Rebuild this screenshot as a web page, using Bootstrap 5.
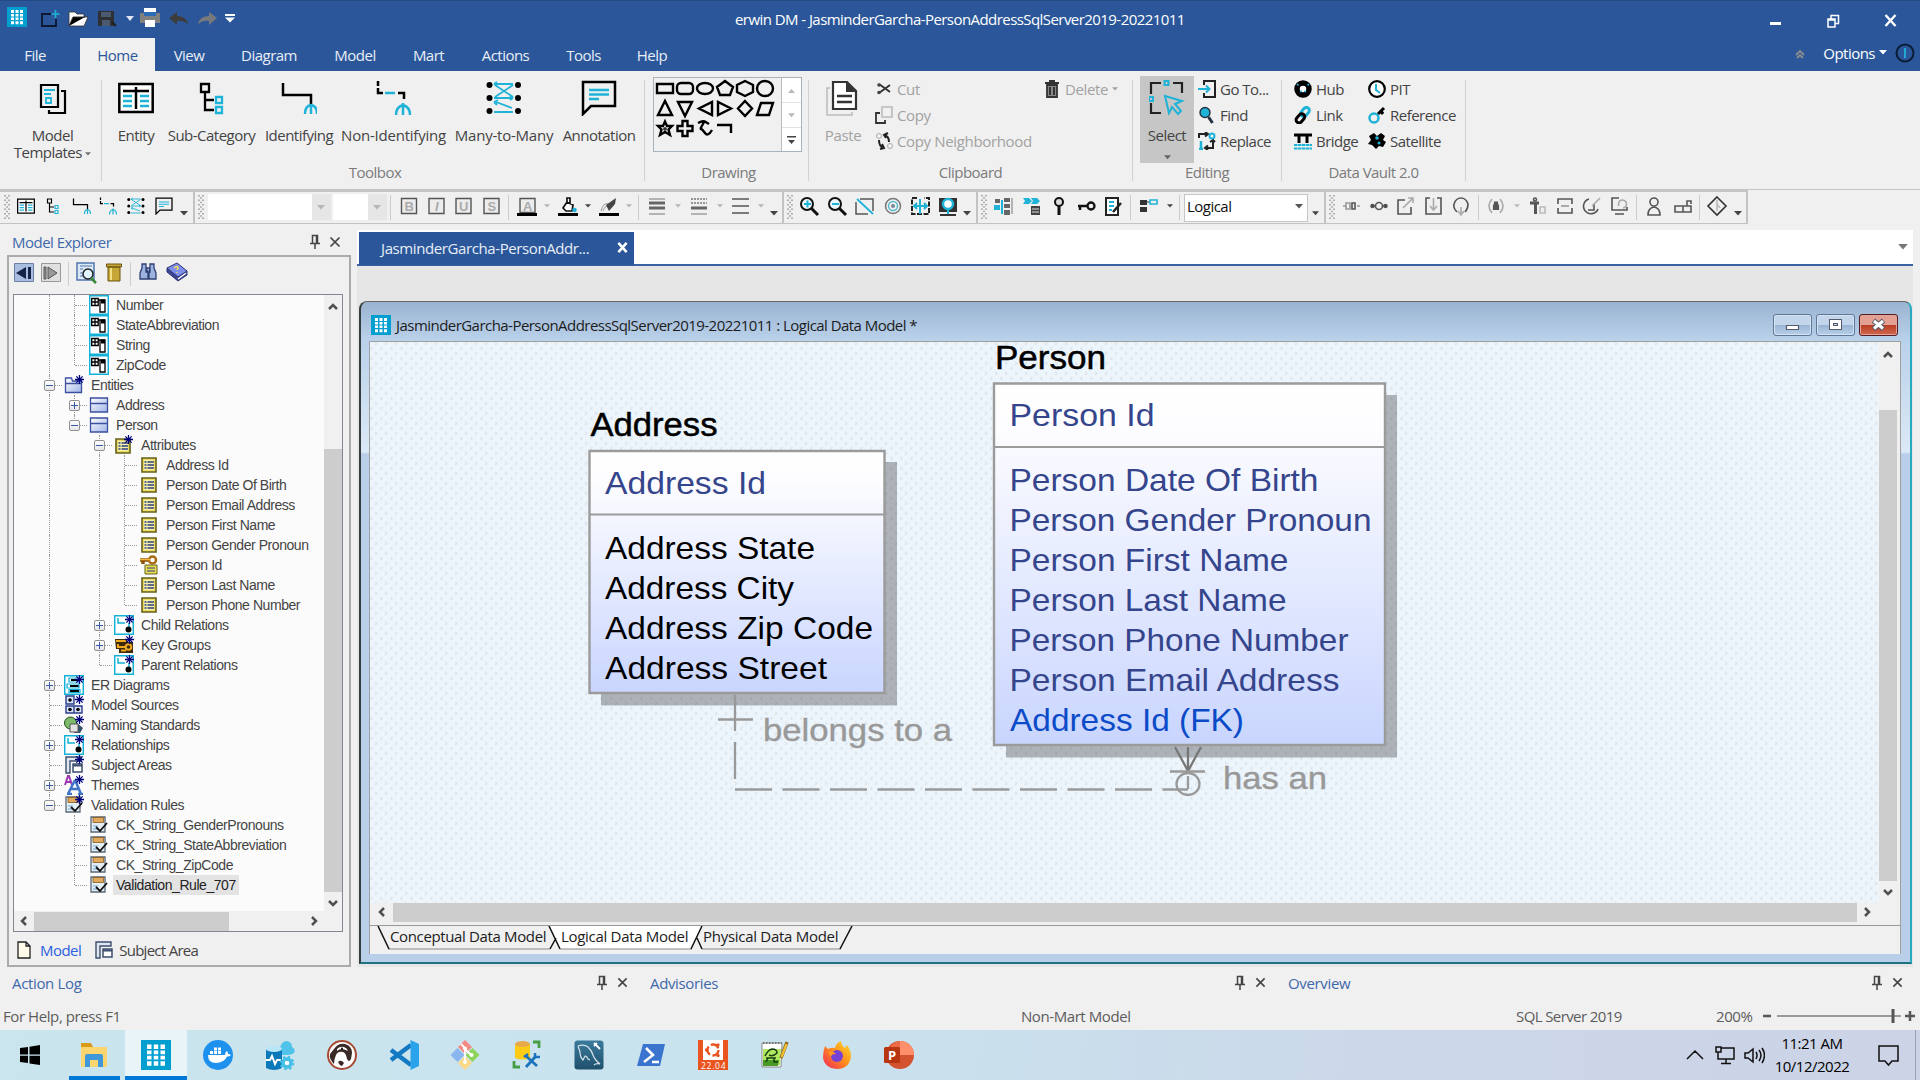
<!DOCTYPE html>
<html lang="en">
<head>
<meta charset="utf-8">
<title>erwin DM</title>
<link href="https://cdn.jsdelivr.net/npm/bootstrap@5.3.0/dist/css/bootstrap.min.css" rel="stylesheet">
<style>
:root{--ribbon:#2b579a;--cy:#1fb3d8;--face:#f0f0f0}
body{width:1920px;height:1080px;overflow:hidden;background:var(--face);font:15px/18px "Open Sans","Noto Sans",sans-serif;letter-spacing:-.52px;color:#444}
svg{display:block;flex:none}
.topbar{background:var(--ribbon);color:#fff;height:71px;border-top:1px solid #244a85}
.topbar .titlerow{height:37px}
.topbar .qat{width:735px}
.apptitle{letter-spacing:-.56px;padding-bottom:2px}
.tabsrow{height:33px}
.rtab{line-height:34px;height:33px;text-align:center;color:#e8eef7}
.rtab.active{background:var(--face);color:var(--ribbon)}
.tabgrid{display:grid;grid-template-columns:70px 10px 75px 68px 92px 80px 67px 87px 69px 68px}
.ribbon{height:119px;border-bottom:1px solid #c4c4c4;padding-top:1px}
.rgroup{border-right:1px solid #d2d2d2;margin:8px 0 0;height:101px;display:flex;flex-direction:column;justify-content:space-between;position:relative}
.rgroup>.cap{text-align:center;color:#7b7b7b;line-height:17px;white-space:nowrap;padding-left:4px}
.bigb{text-align:center;white-space:nowrap;line-height:17px}
.bigb svg{margin:0 auto 11px}
.toolgrid{display:grid;grid-template-columns:52px 99px 76px 113px 108px 82px;padding-left:8px}
.toolgrid .airy{letter-spacing:-.22px}
.gallery{width:149px;height:75px;border:1px solid #aab2ba;margin:-3px 0 0 8px}
.gallery .scr{width:20px;background:#fff;border-left:1px solid #bbb}
.gallery .scr div{height:25px;border-bottom:1px solid #c4c4c4}
.mini{height:26.2px;line-height:20px;white-space:nowrap;display:flex;gap:4px;align-items:center}
.dis{color:#a2a2a2;letter-spacing:-.35px}
.selbtn{width:54px;height:87px;background:#c6c6c6;margin:-4px 0 0 7px;padding-top:4px;text-align:center}
.strips{height:40px}
.strip{height:34px;border:1px solid #c3c3c3;border-width:2px 2px 1px 0}
.combo{background:#fff;border:1px solid #c6c6c6;height:28px;width:124px;padding:0 4px 3px 2px;color:#111}
.mainrow{height:737px}
.leftdock{width:357px;border-right:0}
.docktitle{color:#3f68ab}
.leftdock .docktitle{height:25px;padding:0 12px 2px}
.xframe{width:344px;height:712px;margin-left:7px;border:2px solid #ababab}
.treebox{width:330px;height:638px;border:1px solid #828790;background:#fbfbfb;margin-left:4px}
.treeview{width:310px;height:616px;overflow:hidden;font:14px/20px "Liberation Sans",sans-serif;letter-spacing:-.44px;color:#444}
.trow{height:20px;display:flex;align-items:center;padding-left:23px;white-space:nowrap}
.tcell{width:25px;height:20px;position:relative;flex:none}
.tcell::before{content:"";position:absolute;left:12px;top:0;height:20px;border-left:1px dotted #999}
.tcell.l::before{height:10px}
.tcell.n::before{display:none}
.tcell.t::after,.tcell.l::after{content:"";position:absolute;left:13px;top:10px;width:12px;border-top:1px dotted #999}
.tcell i{position:absolute;z-index:1;left:7px;top:5px;width:11px;height:11px;border:1px solid #919191;border-radius:2px;background:linear-gradient(#fff,#e6e6e6)}
.tcell i::before{content:"";position:absolute;left:1px;top:4px;width:7px;height:1px;background:#3a5aa8}
.tcell i.plus::after{content:"";position:absolute;left:4px;top:1px;width:1px;height:7px;background:#3a5aa8}
.trow svg{margin:0 4px 0 2px}
.trow .lbl{padding:0 3px}
.trow .lbl.sel{background:#e3e3e3;color:#222}
.vbar{width:18px;height:616px;background:#f0f0f0}
.thumb{background:#cdcdcd}
.flip{transform:rotate(180deg)}
.paneltabs{height:35px;padding-left:8px;letter-spacing:-.72px}
.rightdock{width:1556px}
.doctabs{height:36px;background:#fff;border-bottom:2px solid #3a62a5}
.doctab{background:var(--ribbon);color:#e8eef7;width:275px;margin:2px 0 -1px 2px;padding:0 6px 2px 22px;letter-spacing:-.4px}
.mdiarea{background:#e6e6e6;height:701px;padding:35px 0 0 2px}
.mdiwin{width:1553px;height:663px;border:2px solid #353c3f;border-top:1px solid #666;border-right-color:#28a9c0;border-bottom:2px solid #1d7480;border-radius:8px 8px 0 0;background:linear-gradient(#9ab3d0 0,#b9d1ea 38px,#dce9f6 150px,#b9cfe9 152px);padding:0 9px}
.mdititle{height:39px;color:#1c1c1c;padding:6px 0 0 1px;letter-spacing:-.54px}
.wbtns{gap:4px;margin-right:3px}
.wbtn{width:39px;height:22px;border:1px solid #5f7797;border-radius:3px;box-shadow:inset 0 0 0 1px #d5e3f2;background:linear-gradient(#c3d5ea 48%,#98b5d4 50%,#b8cfe8)}
.wbtn.red{border-color:#5a1a22;box-shadow:inset 0 0 0 1px #e0a59b;background:linear-gradient(#e5a094 48%,#b93c22 50%,#cf6a50)}
.client{width:1532px;height:613px;border:1px solid #a0a0a0;border-bottom:0;background:#f0f0f0;margin-left:-1px}
.canvasrow{height:561px}
.hbar{height:22px}
.modeltabs{height:27px;border-top:1px solid #999;color:#1c1c1c}
.docks{height:31px;letter-spacing:-.35px}
.docks>div{width:638px;padding:0 10px 0 12px}
.docks>div:last-child{padding:0 17px 0 12px}
.docks .pinned{margin-left:auto;margin-right:9px}
.statusrow{height:32px;color:#5c5c5c;padding:4px 0 0 3px;letter-spacing:-.42px}
.taskbar{height:50px;background:linear-gradient(95deg,#cbe5ee 0,#c9e2ee 45%,#cbd8e9 70%,#ccd3e6 100%)}
.titem{width:61.9px;height:50px;display:flex;align-items:center;justify-content:center}
.titem.run{box-shadow:inset 0 -4px #0078d7}
.titem.slim{width:51px;margin:0 5.5px}
.titem.act{background:#e8f4f8}
.clock{width:96px;margin:2px 18px 0 -1px;color:#000;line-height:23px;letter-spacing:-.5px}
</style>
<script src="https://cdn.jsdelivr.net/npm/bootstrap@5.3.0/dist/js/bootstrap.bundle.min.js"></script>
</head>
<body>
<svg width="0" height="0" class="position-absolute">
<defs>
<symbol id="erwin" viewBox="0 0 20 20"><path fill="#009fd0" d="M0 0h20v20H0z"/><g fill="#fff"><path d="M4 3h3v3H4zM8.500 3h3v3h-3zM13 3h3v3h-3zM4 7h3v2.500H4zM8.500 7h3v2.500h-3zM13 7h3v2.500h-3zM4 10.500h3V13H4zM8.500 10.500h3V13h-3zM13 10.500h3V13h-3zM4 14.200h3v3H4zM8.500 14.200h3v3h-3zM13 14.200h3v3h-3z"/></g></symbol>
<symbol id="entity" viewBox="0 0 36 36"><path fill="#fff" stroke="#000" stroke-width="2.500" d="M1.300 4h33.400v28H1.300z"/><path stroke="#000" stroke-width="2.500" d="M5 11h26M18 7v22"/><path stroke="#1fb3d8" stroke-width="2.500" d="M5 16h9M5 21h9M5 26h9M22 16h9M22 21h9M22 26h9"/></symbol>
<symbol id="subcat" viewBox="0 0 36 36"><path fill="none" stroke="#000" stroke-width="2.300" d="M7 4h8v8H7zM11 12v18h9M11 20h9"/><path fill="none" stroke="#1fb3d8" stroke-width="2.300" d="M22 17h6v6h-6zM22 27h6v6h-6z"/></symbol>
<symbol id="ident" viewBox="0 0 36 36"><path fill="none" stroke="#000" stroke-width="2.500" d="M2 3v12h28v11"/><path fill="none" stroke="#1fb3d8" stroke-width="2.500" d="M30 24v10M24 34q0-8 6-9q6 1 6 9"/></symbol>
<symbol id="nonid" viewBox="0 0 36 36"><path fill="none" stroke="#000" stroke-width="2.500" d="M2 1v5M2 8v5h5M22 13h6v6"/><path fill="none" stroke="#1fb3d8" stroke-width="2.500" d="M9 13h10M27 23v12M20 35q0-8 7-10q7 2 7 10"/></symbol>
<symbol id="many" viewBox="0 0 36 36"><path fill="none" stroke="#1fb3d8" stroke-width="1.800" d="M8 4h19M8 18h19M8 32h19M9 5l18 12M27 5L9 17M10 22l16 6M8 4l3-2M8 4l3 2M27 18l-3-2M27 18l-3 2M8 22l4-2M8 22l3 3"/><g><circle cx="3.500" cy="5" r="3"/><circle cx="3.500" cy="18" r="3"/><circle cx="3.500" cy="31" r="3"/><circle cx="32" cy="5" r="3"/><circle cx="32" cy="18" r="3"/><circle cx="32" cy="31" r="3"/></g></symbol>
<symbol id="annot" viewBox="0 0 36 36"><path fill="none" stroke="#000" stroke-width="2.500" d="M2 34V2h32v24H10z"/><path stroke="#1fb3d8" stroke-width="2.300" d="M8 10h20M8 14.500h20M8 19h10"/></symbol>
<symbol id="pin" viewBox="0 0 12 16"><path fill="none" stroke="#444" stroke-width="1.500" d="M3.500 9V1.500h5V9M1 9.500h10M6 10v5M7.500 2v7"/></symbol>
<symbol id="xx" viewBox="0 0 12 12"><path stroke="currentColor" stroke-width="1.700" d="M1.500 1.500l9 9M10.500 1.500l-9 9"/></symbol>
<symbol id="dd" viewBox="0 0 8 5"><path fill="currentColor" d="M0 0h8L4 4.500z"/></symbol>
<symbol id="chev" viewBox="0 0 10 7"><path fill="none" stroke="#505050" stroke-width="2.500" d="M1 6l4-4 4 4"/></symbol>
<symbol id="grip" viewBox="0 0 6 24"><path stroke="#999" stroke-width="1.500" stroke-dasharray="1.500 3" d="M1 0v24M5 0v24"/><path stroke="#999" stroke-width="1.500" stroke-dasharray="1.500 3" stroke-dashoffset="2.200" d="M3 0v24"/></symbol>
<linearGradient id="gblue" x2="1" y2="1"><stop stop-color="#fff"/><stop offset="1" stop-color="#9fb4e6"/></linearGradient>
<symbol id="star" viewBox="0 0 10 10"><path stroke="#00007a" stroke-width="1.400" d="M5 0v10M0 5h10M1.500 1.500l7 7M8.500 1.500l-7 7"/></symbol>
<symbol id="t-dom" viewBox="0 0 20 20"><path fill="#fff" stroke="#12b2d8" stroke-width="1.500" d="M.7.7h18.600v18.600H.7z"/><path fill="none" stroke="#000" stroke-width="1.300" d="M2.700 3.500h6.500v7H2.700zM2.700 7h6.500M6 3.500v7M11 5h5v12h-5zM9 5h2"/><path d="M12 4.500h4v4h-4z"/></symbol>
<symbol id="t-ent" viewBox="0 0 20 20"><path fill="url(#gblue)" stroke="#3d50a0" stroke-width="1.300" d="M1.500 3h17v14h-17z"/><path stroke="#3d50a0" stroke-width="1.500" d="M2 8.500h16"/></symbol>
<symbol id="t-ents" viewBox="0 0 20 20"><path fill="url(#gblue)" stroke="#3d50a0" stroke-width="1.300" d="M1.500 17.500V3h6l1 3h9v11.500zM2 8.500h15"/><use href="#star" x="11" y="0" width="9" height="9"/></symbol>
<symbol id="t-att" viewBox="0 0 20 20"><path fill="#e9da62" stroke="#66601b" stroke-width="1.600" d="M3 3h14v14H3z"/><path fill="#f6f0a8" d="M5 5h10v10H5z"/><path stroke="#2f3f80" stroke-width="1.400" d="M5.500 7h2M8.500 7H15M5.500 10h2M8.500 10H15M5.500 13h2M8.500 13H15"/></symbol>
<symbol id="t-atts" viewBox="0 0 20 20"><use href="#t-att" width="20" height="20" x="-1" y="1"/><use href="#star" x="10" y="0" width="9" height="9"/></symbol>
<symbol id="t-key" viewBox="0 0 20 20"><path fill="#e8dc55" stroke="#66601b" d="M6 10h12v9H6z"/><path stroke="#2f3f80" d="M8 13h8M8 16h8"/><path fill="none" stroke="#8a5208" stroke-width="3.500" d="M1 5h10M4 5v4"/><circle cx="13.500" cy="5" r="3.500" fill="#fff" stroke="#a86a10" stroke-width="2.500"/><path stroke="#f2b53a" stroke-width="1.500" d="M1 4.500h10"/></symbol>
<symbol id="t-rel" viewBox="0 0 20 20"><path fill="#fff" stroke="#12b2d8" stroke-width="1.500" d="M.7.7h18.600v18.600H.7z"/><path fill="none" stroke="#12b2d8" stroke-width="1.500" d="M4 3v5h7M15 8v4"/><circle cx="14.500" cy="14.500" r="3"/><use href="#star" x="11" y="0" width="9" height="9"/></symbol>
<symbol id="t-kg" viewBox="0 0 20 20"><path fill="#3d2a08" d="M1 4h12v3h6v11H5v-4H2z"/><path fill="none" stroke="#f0a922" stroke-width="2" d="M2 6h10M4 9v3h8M7 15.500h5"/><circle cx="14.500" cy="12" r="2.800" fill="none" stroke="#f0a922" stroke-width="2"/><use href="#star" x="11" y="0" width="9" height="9"/></symbol>
<symbol id="t-er" viewBox="0 0 20 20"><path fill="#fff" stroke="#12b2d8" stroke-width="1.500" d="M.7.7h18.600v18.600H.7z"/><path stroke="#000" stroke-width="2.200" d="M7 5h7M6 11h9M6 16h9"/><path fill="none" stroke="#12b2d8" stroke-width="1.200" d="M5 3h10v4H5zM3 9h12v4H3zM5 14.500h11v3H5z"/><use href="#star" x="11" y="0" width="9" height="9"/></symbol>
<symbol id="t-src" viewBox="0 0 20 20"><path fill="#dbe4fa" stroke="#2b3e8a" stroke-width="1.400" d="M2 1h8v8H2zM2 11h8v7H2zM10 11h8v7h-8z"/><circle cx="6" cy="5" r="1.800"/><circle cx="6" cy="14.500" r="1.800"/><circle cx="14" cy="14.500" r="1.800"/><use href="#star" x="11" y="0" width="9" height="9"/></symbol>
<symbol id="t-nam" viewBox="0 0 20 20"><path fill="#35516c" d="M13 8l6 5-3 5h-6z"/><circle cx="6.500" cy="8" r="6" fill="#7dbb6a" stroke="#1e4f1e"/><path fill="#e2e2e2" stroke="#555" d="M6 9h8v8H6z"/><use href="#star" x="11" y="0" width="9" height="9"/></symbol>
<symbol id="t-sub" viewBox="0 0 20 20"><path fill="#dfe6f0" stroke="#3b4f6d" stroke-width="1.400" d="M2 2h15v4H6v12H2z"/><path fill="#fff" stroke="#3b4f6d" stroke-width="1.500" d="M9 9h9v8H9z"/><path stroke="#3b4f6d" stroke-width="2" d="M9 10.500h9"/></symbol>
<symbol id="t-subs" viewBox="0 0 20 20"><use href="#t-sub" width="20" height="20"/><use href="#star" x="11" y="0" width="9" height="9"/></symbol>
<symbol id="t-thm" viewBox="0 0 20 20"><path fill="none" stroke="#9b36b0" stroke-width="2" d="M1 10L4 1h1l3 9M2 7h5"/><path fill="none" stroke="#3f74c8" stroke-width="2.500" d="M4 19l6.500-13h1L17 19M7 14h8M3 19h5M14 19h5"/><use href="#star" x="11" y="0" width="9" height="9"/></symbol>
<symbol id="t-val" viewBox="0 0 20 20"><path fill="#e4eef6" stroke="#5a6875" stroke-width="1.300" d="M2 2h14v15H2z"/><path fill="#e0a95e" stroke="#8a5a1c" stroke-width=".8" d="M4 2.500h10.500v5H4z"/><path stroke="#6da5cf" d="M4 11h5M4 14h5"/><path fill="none" stroke="#111" stroke-width="1.800" d="M7 12l4 4 7-8"/></symbol>
<symbol id="t-vals" viewBox="0 0 20 20"><use href="#t-val" width="20" height="20"/><use href="#star" x="11" y="0" width="9" height="9"/></symbol>
</defs></svg>

<header class="topbar">
 <div class="titlerow d-flex align-items-center">
  <div class="qat">
   <svg width="250" height="38" viewBox="0 0 250 38"><use href="#erwin" x="7" y="6" width="20" height="20"/>
    <path fill="none" stroke="#0c1830" stroke-width="1.800" d="M51 13h-9v12h14v-7"/><path stroke="#1fb3d8" stroke-width="1.600" d="M55.500 9v8M51.500 13h8"/>
    <path fill="#fff" stroke="#333" stroke-width=".8" d="M69 25V11h6l2 2h7v3h4l-4 9z"/><path stroke="#333" d="M69 25l4-9h12"/>
    <path fill="#2f3033" d="M98 10h16v15H98z"/><path fill="#4c5a70" d="M101 11h10v5h-10zM102 19h8v6h-8z"/><path stroke="#222" stroke-width="2" d="M112 21l4 4"/>
    <path fill="#dfe6f3" d="M126 15h8l-4 5z"/>
    <path fill="#fff" d="M144 7h12v7h-12z"/><path fill="#808080" d="M140 12h20v10h-20z"/><path fill="#2b6cb5" d="M144 11h12v4h-12z"/><path fill="#fff" d="M145 19h10v7h-10z"/>
    <path fill="#3c3c3c" d="M169 17l8-6v4q9 0 11 8q-5-4-11-3v4z"/><path fill="#77797c" d="M217 17l-8-6v4q-9 0-11 8q5-4 11-3v4z"/>
    <path fill="#fff" d="M225 13h10v2h-10zM225 16.500h10l-5 5z"/></svg>
  </div>
  <div class="apptitle text-white">erwin DM - JasminderGarcha-PersonAddressSqlServer2019-20221011</div>
  <svg class="ms-auto" width="190" height="38" viewBox="1730 0 190 38"><path fill="#fff" d="M1770 21h11v3h-11z"/><path fill="none" stroke="#fff" stroke-width="1.500" d="M1828 18h7v8h-7zM1831 18v-3.500h7.500v8H1835M1828 19h7"/><path stroke="#fff" stroke-width="2.400" d="M1885.500 14l10 11M1895.500 14l-10 11"/></svg>
 </div>
 <div class="tabsrow d-flex">
  <nav class="tabgrid"><div class="rtab">File</div><div></div><div class="rtab active">Home</div><div class="rtab">View</div><div class="rtab">Diagram</div><div class="rtab">Model</div><div class="rtab">Mart</div><div class="rtab">Actions</div><div class="rtab">Tools</div><div class="rtab">Help</div></nav>
  <div class="ms-auto d-flex align-items-center pb-1"><svg width="28" height="20"><path fill="none" stroke="#8d8d8d" stroke-width="1.800" d="M1 12l4-4 4 4M2 15l3-3 3 3"/></svg>Options<svg class="ms-1" width="8" height="5"><use href="#dd"/></svg><svg class="ms-2" style="margin-right:5px" width="20" height="20"><circle cx="10" cy="10" r="8.500" fill="none" stroke="#0b1c38" stroke-width="2"/><path stroke="#1fb3d8" stroke-width="1.800" d="M10 5v10"/></svg></div>
 </div>
</header>

<section class="ribbon d-flex">
 <div class="rgroup" style="width:102px"><div class="bigb ps-1"><svg width="36" height="36" viewBox="0 0 36 36"><path fill="none" stroke="#000" stroke-width="2.200" d="M6 5h17v22H6zM26 11h4v22H14v-3"/><path stroke="#1fb3d8" stroke-width="2" d="M9 10h11M9 14h7"/><path fill="none" stroke="#1fb3d8" stroke-width="1.800" d="M11 18h5v5h-5z"/></svg>Model<br>Templates <svg class="d-inline m-0 align-middle opacity-75" width="6" height="4"><use href="#dd"/></svg></div></div>
 <div class="rgroup" style="width:543px"><div class="toolgrid">
  <div class="bigb"><svg width="36" height="36"><use href="#entity"/></svg>Entity</div>
  <div class="bigb"><svg width="36" height="36"><use href="#subcat"/></svg>Sub-Category</div>
  <div class="bigb"><svg width="36" height="36"><use href="#ident"/></svg>Identifying</div>
  <div class="bigb airy"><svg width="36" height="36"><use href="#nonid"/></svg>Non-Identifying</div>
  <div class="bigb airy"><svg width="36" height="36"><use href="#many"/></svg>Many-to-Many</div>
  <div class="bigb"><svg width="36" height="36"><use href="#annot"/></svg>Annotation</div></div>
  <div class="cap">Toolbox</div></div>
 <div class="rgroup" style="width:164px"><div class="gallery d-flex">
   <svg width="127" height="73" fill="none" stroke="#000" stroke-width="2.400"><path d="M3 6h16v9H3z"/><rect x="23" y="5" width="16" height="11" rx="4"/><ellipse cx="51" cy="10.500" rx="8" ry="5.500"/><path d="M71 3l8 6-3 8h-10l-3-8zM91 3l8 4v7l-8 4-8-4V7z"/><ellipse cx="111" cy="10.500" rx="8" ry="7.500"/><path d="M4 37l7-14 7 14zM24 24h14l-7 14zM58 24v13l-13-6.500zM64 24v13l13-6.500zM91 23l7 7.500-7 7.500-7-7.500zM107 25h12l-4 12h-12zM11 43.500l2 4.500h5l-3.500 3.500 1.500 5.500-5-3-5 3 1.500-5.500L4 48h5zM28.500 43h5v5h5v5h-5v5h-5v-5h-5v-5h5zM44 45q8-4 5 1t-2 5 4 4 7-3M50 43l5 3M63 47h14v8"/><circle cx="11" cy="51" r=".6"/></svg>
   <div class="scr"><div class="d-flex justify-content-center align-items-center text-secondary opacity-50"><svg width="7" height="5"><path fill="currentColor" d="M0 5l3.500-4L7 5z"/></svg></div><div class="d-flex justify-content-center align-items-center text-secondary opacity-50"><svg width="7" height="5"><use href="#dd"/></svg></div><div class="d-flex justify-content-center align-items-center border-0"><svg width="9" height="9"><path fill="#444" d="M0 0h9v1.500H0zM1 4h7L4.500 8z"/></svg></div></div></div>
  <div class="cap">Drawing</div></div>
 <div class="rgroup" style="width:324px"><div class="d-flex">
   <div class="bigb dis" style="width:54px;margin-left:7px"><svg width="36" height="36" viewBox="0 0 36 36"><path fill="none" stroke="#bbb" stroke-width="1.500" d="M5 8H2v27h25v-3"/><path fill="#fff" stroke="#333" stroke-width="2.200" d="M8 2h14l9 9v18H8z"/><path fill="#333" d="M21 2v10h10z"/><path stroke="#333" stroke-width="2.500" d="M12 16h15M12 22h15"/></svg>Paste</div>
   <div style="width:168px;margin:-4px 0 0 5px" class="dis">
    <div class="mini"><svg width="18" height="18"><path fill="none" stroke="#333" stroke-width="2" d="M4 4l11 8M4 13l11-8"/><circle cx="4" cy="5" r="1.800" fill="#444"/><circle cx="4" cy="12.500" r="1.800" fill="#444"/></svg>Cut</div>
    <div class="mini"><svg width="18" height="18"><path fill="none" stroke="#bbb" stroke-width="1.600" d="M7 1h10v10H7z"/><path fill="none" stroke="#333" stroke-width="1.800" d="M5 7H1v10h9v-3"/></svg>Copy</div>
    <div class="mini"><svg width="18" height="18"><circle cx="4" cy="4" r="2.500" fill="none" stroke="#aaa"/><circle cx="15" cy="14" r="2.500" fill="none" stroke="#aaa"/><path fill="none" stroke="#222" stroke-width="2" d="M4 8q0 7 5 8M7 12l2 4-4 1M14 10q0-6-5-7M11 6L9 3l4-2"/></svg>Copy Neighborhood</div></div>
   <div class="mini dis" style="margin-top:-4px"><svg width="18" height="20"><path fill="#888" stroke="#333" stroke-width="1.800" d="M4 6h10v12H4z"/><path stroke="#333" stroke-width="2" d="M2 4h14M6 2h6M7 8v8M11 8v8"/></svg>Delete<svg width="6" height="4"><use href="#dd"/></svg></div></div>
  <div class="cap ps-0">Clipboard</div></div>
 <div class="rgroup" style="width:149px"><div class="d-flex">
   <div class="selbtn bigb"><svg width="36" height="36" viewBox="0 0 36 36"><path fill="none" stroke="#222" stroke-width="2.200" d="M2 14V3h10M24 3h9v10M2 23v10h10"/><path fill="none" stroke="#1fb3d8" stroke-width="2" d="M15.500 1h4v4h-4zM0 17h4v4H0zM16 16l17 5-7 3 6 7-3 3-6-7-3 6z"/></svg>Select<svg class="mb-0 opacity-75" style="margin-top:11px" width="7" height="5"><use href="#dd"/></svg></div>
   <div style="margin:-4px 0 0 4px"><div class="mini"><svg width="18" height="18"><path fill="none" stroke="#222" stroke-width="2" d="M6 5V1h11v16H6v-4"/><path fill="none" stroke="#1fb3d8" stroke-width="2" d="M0 9h11M8 5.500L11.500 9 8 12.500"/></svg>Go To...</div>
   <div class="mini"><svg width="18" height="18"><circle cx="7" cy="6.500" r="5" fill="#1fb3d8" stroke="#234" stroke-width="1.400"/><path stroke="#234" stroke-width="3" d="M10.500 11l4 6"/></svg>Find</div>
   <div class="mini"><svg width="18" height="18"><path fill="none" stroke="#222" stroke-width="2" d="M1 6V2h8M15 9v7H8M7 0l3 2-3 2.500M12 10l3-2 2 2M10 13.500L7 16l3 2"/><circle cx="14" cy="4" r="2.500" fill="none" stroke="#1fb3d8" stroke-width="2"/><path stroke="#1fb3d8" stroke-width="2.500" d="M3 9v8M1 17h4"/></svg>Replace</div></div></div>
  <div class="cap ps-0">Editing</div></div>
 <div class="rgroup" style="width:184px"><div class="d-flex" style="margin:-4px 0 0 12px">
   <div style="width:74px"><div class="mini"><svg width="18" height="18"><circle cx="9" cy="9" r="6" fill="#fff" stroke="#000" stroke-width="5.500"/><path stroke="#1fb3d8" stroke-width="1.600" stroke-dasharray="2 8" d="M3 4l12 11M15 4L3 15"/></svg>Hub</div>
   <div class="mini"><svg width="18" height="18" fill="none" stroke-width="3"><rect x="8" y="1" width="6" height="10" rx="3" transform="rotate(40 11 6)" stroke="#1fb3d8"/><rect x="3.500" y="7" width="6" height="10" rx="3" transform="rotate(40 6 12)" stroke="#000"/></svg>Link</div>
   <div class="mini"><svg width="18" height="18"><path stroke="#000" stroke-width="3" d="M0 3h18M5 3v8M13 3v8"/><path stroke="#1fb3d8" stroke-width="2" stroke-dasharray="3.500 .5" d="M0 13h18M0 16.500h18"/></svg>Bridge</div></div>
   <div><div class="mini"><svg width="18" height="18"><circle cx="9" cy="9" r="7.800" fill="#fff" stroke="#000" stroke-width="2.200"/><path fill="none" stroke="#1fb3d8" stroke-width="2" d="M8 4v6l4 3"/></svg>PIT</div>
   <div class="mini"><svg width="18" height="18"><circle cx="6" cy="12" r="4.500" fill="none" stroke="#1fb3d8" stroke-width="2.500"/><path fill="none" stroke="#000" stroke-width="3" d="M10 8l6-6M12 4l3 4"/></svg>Reference</div>
   <div class="mini"><svg width="18" height="18"><path d="M1 4l5-3 3 3 4-3 4 3-2 4 3 2-3 5-4-1-3 3-4-4-4-1 3-4z"/><circle cx="9" cy="6" r="1.800" fill="#1fb3d8"/><circle cx="11" cy="11" r="1.500" fill="#1fb3d8"/></svg>Satellite</div></div></div>
  <div class="cap ps-0">Data Vault 2.0</div></div>
</section>

<section class="strips d-flex">
 <div class="strip"><svg width="193" height="31" viewBox="0 192 193 31"><use href="#grip" x="4" y="195" width="6" height="24"/><use href="#entity" x="17" y="197" width="18" height="18"/><use href="#subcat" x="44" y="197" width="18" height="18"/><use href="#ident" x="72" y="197" width="19" height="18"/><use href="#nonid" x="99" y="197" width="19" height="18"/><use href="#many" x="127" y="197" width="18" height="18"/><use href="#annot" x="155" y="197" width="18" height="18"/><use href="#dd" x="180" y="211" width="8" height="5"/></svg></div>
 <div class="strip"><svg width="587" height="31" viewBox="195 192 587 31"><use href="#grip" x="198" y="195" width="6" height="24"/><path fill="#fff" d="M208 194h104v26H208zM333 194h35v26h-35z"/><path fill="#e6e6e6" d="M312 194h19v26h-19zM368 194h19v26h-19z"/><g color="#b5b5b5"><use href="#dd" x="317" y="205" width="8" height="5"/><use href="#dd" x="373" y="205" width="8" height="5"/><use href="#dd" x="544" y="204" width="6" height="4"/><use href="#dd" x="626" y="204" width="6" height="4"/><use href="#dd" x="675" y="204" width="6" height="4"/><use href="#dd" x="717" y="204" width="6" height="4"/><use href="#dd" x="758" y="204" width="6" height="4"/></g><use href="#dd" x="585" y="204" width="6" height="4"/><use href="#dd" x="770" y="211" width="8" height="5"/>
  <path stroke="#ccc" d="M390.500 195v25M508.500 195v25M638.500 195v25"/>
  <g fill="#ececec" stroke="#555" stroke-width="1.400"><path d="M401.500 198.500h15v15h-15zM429 198.500h15v15h-15zM456 198.500h15v15h-15zM484 198.500h15v15h-15zM520 198.500h15v14h-15z"/></g>
  <g font-family="Liberation Sans" font-size="13" font-weight="700" fill="#aaa" text-anchor="middle"><text x="409" y="211">B</text><text x="436.500" y="211" font-style="italic">I</text><text x="463.500" y="211">U</text><text x="491.500" y="211">S</text><text x="527.500" y="211">A</text></g>
  <path d="M517 213h20v3h-20zM558 213h20v3h-20zM599 213h20v3h-20z"/><path fill="#fff" stroke="#111" stroke-width="1.700" d="M563 208l4-6 6 3-1 6h-6zM567 202v-4h3v6"/><circle cx="574.500" cy="210" r="2.300" fill="#1fb3d8"/><path fill="none" stroke="#999" d="M601 211q2-9 8-7M603 211q2-6 6-5"/><path fill="#444" d="M606 205l10-7-1 6-6 7z"/>
  <path stroke="#777" d="M649 199h16M649 214h16" /><path stroke="#666" stroke-width="3" d="M649 203h16M649 208h16M691 208h16"/><path stroke="#777" stroke-width="1.500" stroke-dasharray="2 1" d="M691 199h16M691 203h16"/><path stroke="#777" d="M691 214h16"/><path stroke="#555" stroke-width="1.300" d="M732 199h17M732 206h17M732 213h17"/></svg></div>
 <div class="strip"><svg width="192" height="31" viewBox="784 192 192 31"><use href="#grip" x="787" y="195" width="6" height="24"/>
  <g fill="#e9f6fb" stroke="#111" stroke-width="2"><circle cx="807" cy="204" r="6"/><path stroke-width="3" d="M811 208l7 7"/><circle cx="835" cy="204" r="6"/><path stroke-width="3" d="M839 208l7 7"/></g><path stroke="#1fb3d8" stroke-width="2" d="M804 204h7M807.500 200.500v7M832 204h7"/>
  <path fill="none" stroke="#555" stroke-width="1.500" d="M860 199h13v12M856 202v12h12"/><path stroke="#1fb3d8" stroke-width="1.800" d="M857 199l16 15"/><circle cx="893" cy="206" r="7.500" fill="none" stroke="#777" stroke-width="1.500"/><circle cx="893" cy="206" r="4.500" fill="none" stroke="#5bc" stroke-width="1.500"/><circle cx="893" cy="206" r="2" fill="#789"/>
  <path fill="none" stroke="#222" stroke-width="2" stroke-dasharray="5 1.500" d="M917 198h-5v16h17v-16h-5"/><path stroke="#1fb3d8" stroke-width="2" d="M914 206h13M920 199v15M917 203l-3 3 3 3M924 203l3 3-3 3"/><path fill="#333" d="M939 198h18v14h-18z"/><circle cx="948" cy="204" r="5" fill="#fff" stroke="#1fb3d8" stroke-width="2.500"/><path stroke="#1fb3d8" stroke-width="2" d="M948 209v5"/><path stroke="#333" stroke-width="2" d="M940 215h16"/><use href="#dd" x="963" y="211" width="8" height="5"/></svg></div>
 <div class="strip d-flex align-items-center"><svg width="206" height="31" viewBox="978 192 206 31"><use href="#grip" x="981" y="195" width="6" height="24"/>
  <path fill="#1fb3d8" d="M994 205h6v5h-6zM1001 200h2v14h-2z"/><path fill="#666" d="M995 199h5v4h-5zM1004 198h6v4h-6zM1004 204h6v4h-6zM1004 210h6v5h-6z"/><path fill="none" stroke="#777" d="M1012 198v16"/><path fill="#1fb3d8" d="M1023 198h6l3 3-3 3h-6l2-3zM1031 198h6l3 3-3 3h-6l2-3z"/><path fill="#444" d="M1031 206h9v9h-9z"/><path stroke="#ddd" d="M1032 209h7M1032 212h7"/>
  <circle cx="1059" cy="202" r="4" fill="#ddd" stroke="#111" stroke-width="2"/><path stroke="#111" stroke-width="3" d="M1059 206v9"/><circle cx="1091" cy="206" r="3.500" fill="none" stroke="#111" stroke-width="2.300"/><path stroke="#111" stroke-width="2.500" d="M1078 206h10M1080 206v4"/><path fill="#fff" stroke="#222" stroke-width="2" d="M1106 198h12v17h-12z"/><path stroke="#1fb3d8" stroke-width="2" d="M1109 202h5M1109 206h5M1109 210h3"/><path stroke="#222" stroke-width="2.500" d="M1113 212l8-9"/>
  <path stroke="#ccc" d="M1130.500 195v25M1179.500 195v25"/><path fill="#333" d="M1140 200h7v5h-7zM1140 207h7v5h-7z"/><path stroke="#333" d="M1147 202h3"/><path fill="none" stroke="#1fb3d8" stroke-width="1.600" d="M1150 200h7v4h-7z"/><use href="#dd" x="1167" y="204" width="6" height="4"/></svg>
  <div class="combo d-flex align-items-center justify-content-between"><span>Logical</span><svg width="8" height="5" color="#555"><use href="#dd"/></svg></div><svg width="16" height="31" viewBox="0 0 16 31"><use href="#dd" x="4" y="19" width="7" height="5"/></svg></div>
 <div class="strip"><svg width="420" height="31" viewBox="1326 192 420 31"><use href="#grip" x="1329" y="195" width="6" height="24"/>
  <g fill="none" stroke="#555" stroke-width="1.600"><path stroke="#999" d="M1343 206h3M1357 206h3M1346 203h4v6h-4z"/><path d="M1352 203h3v6h-3z"/><circle cx="1379" cy="206" r="3.500"/><path d="M1374 206h2M1382 206h2"/><circle cx="1372.500" cy="206" r="1.500" fill="#333"/><circle cx="1385.500" cy="206" r="1.500" fill="#333"/><path d="M1405 200h-7v14h13v-7"/><path stroke="#aaa" d="M1403 208l10-10M1408 198h5v5"/><path d="M1430 198h-4v16h15v-16h-4"/><path stroke="#aaa" d="M1433.500 198v11M1430 206l3.500 4 3.500-4"/><path d="M1457 212q-4-4-3-8q2-6 7-6t7 6q0 5-3 8"/><path stroke="#aaa" d="M1461 207v6M1458 211l3 4 3-4"/><path stroke="#aaa" d="M1492 213q-6-7 0-14M1500 213q6-7 0-14"/><path fill="#555" stroke-width="1.200" d="M1493.500 205h5v4.500h-5zM1494.500 205v-3h3v3"/><circle cx="1535" cy="199.500" r="1.500"/><path stroke-width="3" d="M1535.500 202v12M1530 203h9"/><path stroke="#bbb" d="M1540 207h5v6h-5z"/><path d="M1558 204v-5h14v5M1558 208v5h14v-5"/><path stroke="#999" d="M1561 206h8"/><path d="M1589 199a7.500 7.500 0 1 0 9 10M1594 204v6h-6"/><path stroke="#aaa" d="M1592 206l8-8"/><path d="M1619 198h-7v12h15v-3M1615 214h9"/><path stroke="#aaa" d="M1619 206a4 4 0 1 1 4 2"/><circle cx="1654" cy="202" r="4"/><path d="M1648 215q0-7 6-8q6 1 6 8zM1675 206h8v6h-8zM1683 206h8v6h-8zM1687 206v-5h4v3"/><path stroke="#333" d="M1717 197l9 9-9 9-9-9z"/><path stroke="#bbb" d="M1717 200v11M1717 204l3 4"/></g>
  <g stroke="#ccc"><path d="M1478.500 195v25M1636.500 195v25M1699.500 195v25"/></g><g color="#bbb"><use href="#dd" x="1514" y="204" width="6" height="4"/></g><use href="#dd" x="1734" y="211" width="8" height="5"/></svg></div>
</section>

<main class="mainrow d-flex">
 <aside class="leftdock">
  <div class="docktitle d-flex align-items-center"><span>Model Explorer</span><svg class="ms-auto me-2" width="12" height="16"><use href="#pin"/></svg><svg width="12" height="12" color="#444" class="me-1"><use href="#xx"/></svg></div>
  <div class="xframe">
   <svg width="330" height="37" viewBox="9 257 330 37"><path fill="#a9bde0" stroke="#6d7fa5" d="M14.500 263.500h19v18h-19z"/><path fill="#15234a" d="M26 267v12l-10-6zM28 267h3v12h-3z"/><path fill="#e0e0e0" stroke="#999" d="M41.500 263.500h19v18h-19z"/><path fill="#999" stroke="#555" d="M44 267h2v12h-2zM48 267v12l9-6z"/><path stroke="#ccc" d="M68.500 262v24M130.500 262v24"/><path fill="#dbe8f8" stroke="#5276ad" stroke-width="1.500" d="M77 263h17v17H77z"/><path stroke="#5276ad" d="M80 266h12M80 269h3M80 273h3M80 276h3"/><circle cx="88" cy="274" r="5" fill="#e2f3fb" stroke="#222" stroke-width="1.500"/><path stroke="#3a8a35" stroke-width="2.500" d="M91 278l5 5"/><path fill="#c6a637" stroke="#6c5612" d="M108 267h12v14h-12zM106.500 264h15v3h-15z"/><path stroke="#f3df86" stroke-width="2" d="M111 268v12"/><path fill="#9db3df" stroke="#2e3f74" stroke-width="1.300" d="M142 264h4v4l2 5v6h-8v-6l2-5zM150 264h4v4l2 5v6h-7v-6l1-5zM146 268h4v4h-4z"/><path fill="#3c468f" stroke="#2c3577" d="M167 268v4l11 9 9-6v-4z"/><path stroke="#fff" stroke-width="1.500" d="M178 279l8-6"/><path fill="#7f8eea" stroke="#2c3577" d="M167 268l10-5 10 8-9 6z"/><path fill="none" stroke="#f5e04a" stroke-width="1.500" d="M174 268q4-3 4 0l-1 2M177 272v1"/></svg>
   <div class="treebox">
    <div class="d-flex"><div class="treeview" id="tree"></div>
     <div class="vbar d-flex flex-column align-items-center"><svg width="10" height="7" style="margin:8px 0 139px"><use href="#chev"/></svg><div class="thumb w-100" style="height:443px"></div><svg class="flip" width="10" height="7" style="margin-top:8px"><use href="#chev"/></svg></div></div>
    <div class="d-flex align-items-center" style="height:20px;background:#f0f0f0"><svg width="20" height="18"><path fill="none" stroke="#505050" stroke-width="2.500" d="M12 5L8 9l4 4"/></svg><div class="thumb" style="width:195px;height:19px"></div><svg style="margin-left:78px" width="18" height="18"><path fill="none" stroke="#505050" stroke-width="2.500" d="M5 5l4 4-4 4"/></svg></div>
   </div>
   <div class="paneltabs d-flex align-items-center"><svg width="14" height="18"><path fill="#fffbe8" stroke="#222" stroke-width="1.300" d="M1 1h8l4 4v12H1zM9 1v4h4"/></svg><span style="color:#2a5fe0;margin:0 13px 0 9px;letter-spacing:-.55px">Model</span><svg width="20" height="20"><use href="#t-sub"/></svg><span style="margin-left:5px">Subject Area</span></div>
  </div>
 </aside>
 <section class="rightdock">
  <div class="doctabs d-flex"><div class="doctab d-flex align-items-center justify-content-between"><span>JasminderGarcha-PersonAddr...</span><svg width="11" height="11" viewBox="0 0 12 12"><path stroke="#fff" stroke-width="2.800" d="M1.500 1l9 10M10.500 1l-9 10"/></svg></div><svg class="ms-auto me-1" style="margin-top:14px" width="12" height="6" color="#777"><use href="#dd"/></svg></div>
  <div class="mdiarea"><div class="mdiwin">
   <div class="mdititle d-flex align-items-center"><svg width="20" height="20" style="margin-right:5px"><use href="#erwin"/></svg><span>JasminderGarcha-PersonAddressSqlServer2019-20221011 : Logical Data Model *</span>
    <div class="wbtns ms-auto d-flex"><div class="wbtn"><svg width="37" height="20"><path fill="#fff" stroke="#555b6b" stroke-width="1.200" d="M12.500 10.500h12v4h-12z"/></svg></div><div class="wbtn"><svg width="37" height="20"><path fill="none" stroke="#555b6b" stroke-width="5" d="M14.500 6.500h8v6h-8z"/><path fill="none" stroke="#fff" stroke-width="3" d="M14.500 6.500h8v6h-8z"/></svg></div><div class="wbtn red"><svg width="37" height="20"><path stroke="#555b6b" stroke-width="5" d="M13.500 5.500l10 8.500M23.500 5.500l-10 8.500"/><path stroke="#fff" stroke-width="3" d="M14 6l9 7.500M23 6l-9 7.500"/></svg></div></div></div>
   <div class="client">
    <div class="canvasrow d-flex">
     <svg width="1509" height="561" viewBox="370 342 1509 561" overflow="visible" font-family="Liberation Sans,sans-serif" letter-spacing="0">
      <defs><pattern id="paper" width="10" height="10" patternUnits="userSpaceOnUse"><rect width="10" height="10" fill="#edf5fc"/><path fill="none" stroke="#dde5ea" stroke-width="1.200" d="M5 2l2 1.500L5 5M2.500 7L.5 8.500l2 1.500"/></pattern>
      <linearGradient id="box" x2="0" y2="1"><stop stop-color="#fff"/><stop offset=".12" stop-color="#fdfdff"/><stop offset="1" stop-color="#c9d5fe"/></linearGradient></defs>
      <rect x="370" y="342" width="1509" height="561" fill="url(#paper)"/>
      <path fill="#000" fill-opacity=".27" d="M601 462h296v243.500H601zM1006 395h391v362.500h-391z"/>
      <g fill="url(#box)" stroke="#9b9b9b" stroke-width="2.400"><path d="M589.500 451h295v242h-295z"/><path d="M994 383.500h391V745H994z"/></g>
      <path stroke="#9b9b9b" stroke-width="2.200" d="M590 514.500h294M995 447h390"/>
      <g font-size="32.500" stroke-width=".5" stroke="#000"><text x="590.500" y="436" textLength="127" lengthAdjust="spacingAndGlyphs">Address</text><text x="995" y="368.500" textLength="111" lengthAdjust="spacingAndGlyphs">Person</text></g>
      <g font-size="31.500" fill="#000"><text x="605" y="558.500" textLength="210" lengthAdjust="spacingAndGlyphs">Address State</text><text x="605" y="598.500" textLength="189" lengthAdjust="spacingAndGlyphs">Address City</text><text x="605" y="638.500" textLength="268" lengthAdjust="spacingAndGlyphs">Address Zip Code</text><text x="605" y="678.500" textLength="222" lengthAdjust="spacingAndGlyphs">Address Street</text></g>
      <g font-size="31.500" fill="#35458c"><text x="605" y="493.500" textLength="161" lengthAdjust="spacingAndGlyphs">Address Id</text><text x="1009.500" y="426" textLength="145" lengthAdjust="spacingAndGlyphs">Person Id</text><text x="1009.500" y="491" textLength="309" lengthAdjust="spacingAndGlyphs">Person Date Of Birth</text><text x="1009.500" y="531" textLength="362" lengthAdjust="spacingAndGlyphs">Person Gender Pronoun</text><text x="1009.500" y="571" textLength="279" lengthAdjust="spacingAndGlyphs">Person First Name</text><text x="1009.500" y="611" textLength="277" lengthAdjust="spacingAndGlyphs">Person Last Name</text><text x="1009.500" y="651" textLength="339" lengthAdjust="spacingAndGlyphs">Person Phone Number</text><text x="1009.500" y="691" textLength="330" lengthAdjust="spacingAndGlyphs">Person Email Address</text><text x="1010" y="731" fill="#0b4bc8" textLength="234" lengthAdjust="spacingAndGlyphs">Address Id (FK)</text></g>
      <g font-size="31.500" fill="#999" stroke="#999" stroke-width=".4"><text x="763" y="741" textLength="189" lengthAdjust="spacingAndGlyphs">belongs to a</text><text x="1223" y="788.500" textLength="104" lengthAdjust="spacingAndGlyphs">has an</text></g>
      <g fill="none" stroke="#999" stroke-width="2.300"><path d="M735 695v36M718 719.500h35M735 742v37"/><path stroke-dasharray="37 10.500" d="M735 789.500h453"/><path stroke="#777" d="M1188 747v24M1175 747l13 24 13-24"/><path d="M1170 771.500h35M1188 776v13"/><ellipse cx="1188" cy="784" rx="11.500" ry="11"/></g>
     </svg>
     <div style="width:18px" class="d-flex flex-column align-items-center"><svg width="10" height="7" style="margin:9px 0 52px"><use href="#chev"/></svg><div class="thumb w-100" style="height:471px"></div><svg class="flip" width="10" height="7" style="margin-top:8px"><use href="#chev"/></svg></div>
    </div>
    <div class="hbar d-flex align-items-start"><svg width="23" height="18"><path fill="none" stroke="#505050" stroke-width="2.500" d="M14 5l-4 4 4 4"/></svg><div class="thumb" style="width:1464px;height:19px"></div><svg width="20" height="18"><path fill="none" stroke="#505050" stroke-width="2.500" d="M8 5l4 4-4 4"/></svg></div>
    <div class="modeltabs"><svg width="500" height="26" viewBox="370 926 500 26" font-size="15" font-family="Open Sans,sans-serif"><path fill="#fff" d="M550 926h153l-11 23h-132z"/><path fill="none" stroke="#888" d="M388 949h162M560 949h132M702 949h139"/><path fill="none" stroke="#111" stroke-width="1.500" d="M378 926l11 23M549 926l11 23M556 938l-6 11M702 926l-11 23M697 938l5 11M852 926l-12 23"/><g fill="#1c1c1c"><text x="390" y="942" textLength="156">Conceptual Data Model</text><text x="561" y="942" textLength="127">Logical Data Model</text><text x="703" y="942" textLength="135">Physical Data Model</text></g></svg></div>
   </div></div></div>
 </section>
</main>

<section class="docks d-flex docktitle">
 <div class="d-flex align-items-center">Action Log<svg class="pinned" width="12" height="16"><use href="#pin"/></svg><svg width="11" height="11" color="#444"><use href="#xx"/></svg></div>
 <div class="d-flex align-items-center">Advisories<svg class="pinned" width="12" height="16"><use href="#pin"/></svg><svg width="11" height="11" color="#444"><use href="#xx"/></svg></div>
 <div class="d-flex align-items-center flex-fill">Overview<svg class="pinned" width="12" height="16"><use href="#pin"/></svg><svg width="11" height="11" color="#444"><use href="#xx"/></svg></div>
</section>
<footer class="statusrow d-flex align-items-center"><div style="width:1018px">For Help, press F1</div><div style="width:495px">Non-Mart Model</div><div style="width:200px;letter-spacing:-.6px">SQL Server 2019</div><div style="width:36px">200%</div><svg class="ms-2" width="156" height="22" viewBox="1760 0 156 22"><path stroke="#555" stroke-width="2.500" d="M1763 11h8M1905 11h10M1910 6v10"/><path stroke="#999" stroke-width="2" d="M1777 11h124"/><path stroke="#555" stroke-width="3" d="M1893 4v14"/></svg></footer>

<nav class="taskbar d-flex">
 <div class="titem" style="width:63px"><svg width="22" height="22" style="margin-right:4px"><path d="M1 4l8-1v7.500H1zM10.500 2.800L21 1v9.500H10.500zM1 11.800h8V19l-8-1zM10.500 11.800H21V21l-10.500-1.500z"/></svg></div>
 <div class="titem run slim"><svg width="30" height="28"><path fill="#d99a19" d="M2 2h10l2 4H2z"/><path fill="#fbd56d" d="M2 6h26v20H2z"/><path fill="#3d97d8" d="M6 26V15q0-2 2-2h14q2 0 2 2v11h-5v-7h-8v7z"/></svg></div>
 <div class="titem run act"><svg width="30" height="30"><use href="#erwin"/></svg></div>
 <div class="titem"><svg width="30" height="30"><circle cx="15" cy="15" r="15" fill="#1e90ee"/><path fill="#fff" d="M5 15h17q0-3 2-4 1 1 1 3 2 0 3 1-2 2-4 1.500Q21 23 13 23q-8 0-8-8zM7 11h3v3H7zM11 11h3v3h-3zM15 11h3v3h-3zM11 7.500h3v3h-3zM15 7.500h3v3h-3z"/></svg></div>
 <div class="titem"><svg width="30" height="30"><path fill="#4fc3ea" d="M15 9q1-8 7-8 5 1 5 6 4 2 2 6-3 2-6 2h-8z"/><path fill="#0b78b9" d="M1 9h16v19q-8 4-16 0z"/><ellipse cx="9" cy="9" rx="8" ry="3" fill="#b9e6f7"/><path fill="none" stroke="#fff" stroke-width="2" d="M1 20h4l2-4 3 8 2-4h4"/><circle cx="22" cy="23" r="4" fill="#fff" stroke="#46bfe5" stroke-width="3.500"/><circle cx="22" cy="23" r="6.300" fill="none" stroke="#46bfe5" stroke-width="2" stroke-dasharray="2.500 2.450"/></svg></div>
 <div class="titem"><svg width="30" height="30"><circle cx="15" cy="15" r="14" fill="#fff" stroke="#a84a33" stroke-width="2"/><path fill="#3a2a25" d="M7 9q4-6 11-5 7 2 7 9l-1 6q-2 4-4 0-1-6-4-7-5-1-7 3-2 4-2 9-5-5-4-10z"/><path fill="#fff" d="M10 9q3-3 7-2 3 1 4 4-4-2-6-2-3 0-5 2z"/><circle cx="15" cy="8.500" r="1"/><path fill="#3a2a25" d="M11 22q3-3 6 1l-2 3q-3-1-4-4z"/></svg></div>
 <div class="titem"><svg width="30" height="30"><path fill="none" stroke="#1279c2" stroke-width="4.500" d="M2 10l20 15M2 20L22 5"/><path fill="#2ba3ea" d="M21.500 0L30 4v22l-8.500 4z"/></svg></div>
 <div class="titem"><svg width="30" height="30"><path fill="#f58a83" d="M15 0l7 7-7 7-7-7z"/><path fill="#89b6ee" d="M7.500 8l7 7-7 7-7-7z"/><path fill="#8fd45a" d="M22.500 8l7 7-7 7-7-7z"/><path fill="#fbd989" d="M15 16l7 7-7 7-7-7z"/><path fill="none" stroke="#fff" stroke-width="1.800" d="M11 4l4 4v14M15 9l6 6"/><g fill="#fff"><circle cx="15" cy="8.500" r="2"/><circle cx="21.500" cy="15" r="2"/><circle cx="15" cy="22" r="2"/></g></svg></div>
 <div class="titem"><svg width="30" height="30"><path fill="#fccb16" d="M3 4h15v14q-7 3-15 0z"/><ellipse cx="10.500" cy="4" rx="7.500" ry="3" fill="#e8a94a"/><path fill="none" stroke="#459e46" stroke-width="2.800" d="M21 2h6v6M2 21v6h6"/><path stroke="#1d73bd" stroke-width="2.800" d="M14 16l11 10M24 16L14 27"/><path fill="none" stroke="#1d73bd" stroke-width="2.500" d="M12 17l4-3M23 13v4h5"/></svg></div>
 <div class="titem"><svg width="30" height="30"><defs><linearGradient id="my" x2="0" y2="1"><stop stop-color="#3b7a9c"/><stop offset="1" stop-color="#1f506c"/></linearGradient></defs><rect x=".5" y=".5" width="29" height="29" rx="3" fill="url(#my)"/><path fill="none" stroke="#d5e2e9" stroke-width="1.200" d="M4 6q6-2 10 1 4 4 5 8 1 4 7 9-4-1-6 1M4 6q1 3 2 6 0 5 3 8l2-4q2 0 3 3l2 1"/><path stroke="#fff" stroke-width="1.800" d="M20 3l6 6M20 6l3-3"/></svg></div>
 <div class="titem"><svg width="30" height="30"><path fill="#3a74cf" d="M7 4h22l-5 22H1z"/><path fill="none" stroke="#fff" stroke-width="2.600" d="M10 8l7 7-9 7M16 22h7"/></svg></div>
 <div class="titem"><svg width="30" height="30"><path fill="#e95420" d="M0 0h30v30H0z"/><path fill="#fff" d="M5 0h20v20H5z"/><circle cx="15" cy="10" r="5.500" fill="none" stroke="#e95420" stroke-width="2.300" stroke-dasharray="9 2.500"/><circle cx="20" cy="5" r="1.700" fill="#e95420"/><circle cx="8.500" cy="10" r="1.700" fill="#e95420"/><circle cx="20" cy="15.500" r="1.700" fill="#e95420"/><text x="3" y="29" font-size="8.500" textLength="24" fill="#fff" font-family="Open Sans">22.04</text></svg></div>
 <div class="titem"><svg width="30" height="30"><path fill="#fff" stroke="#888" d="M2 3h20l-1 24H2z"/><path stroke="#777" stroke-dasharray="1.500 1.500" stroke-width="2" d="M3 3h19"/><path fill="#b2e860" d="M3 9h18l-1 16H3z"/><path fill="#4a9a28" d="M3 20h16l-1 6H3z"/><path fill="none" stroke="#173f10" stroke-width="1.500" d="M5 16q3-6 7-7 5 0 5 4-4 4-8 2M6 18h10M8 18l-2 4M14 18v4h4"/><path stroke="#8d6a1f" stroke-width="3.500" d="M21 18l6-16"/><path stroke="#f3bf2e" stroke-width="2.200" d="M21.500 17l5-13"/></svg></div>
 <div class="titem"><svg width="30" height="30"><defs><linearGradient id="ff" x1="1" x2="0" y2="1"><stop stop-color="#ffe226"/><stop offset=".5" stop-color="#ff8a1d"/><stop offset="1" stop-color="#f0225f"/></linearGradient></defs><path fill="url(#ff)" d="M3 6l3 3q4-2 7-1 1-5 6-7 0 4 4 7l2-3q4 5 4 12-2 12-14 12Q2 28 1 17 1 11 3 6z"/><circle cx="15" cy="16" r="6" fill="#7542d5"/><path fill="#ff9820" d="M6 12q5-2 8 2-5 0-5 3z"/></svg></div>
 <div class="titem"><svg width="30" height="30"><circle cx="16" cy="15" r="14" fill="#d35230"/><path fill="#ff8f6b" d="M16 1a14 14 0 0 1 14 14H16z"/><path fill="#ed6c47" d="M16 1v14H4Q4 3 16 1z"/><rect y="7" width="16" height="16" rx="1.500" fill="#b7350f"/><text x="4" y="20" font-size="13" font-weight="700" fill="#fff" font-family="Open Sans">P</text></svg></div>
 <svg class="ms-auto" width="80" height="50" viewBox="1685 1030 80 50" fill="none" stroke="#111" stroke-width="1.500"><path d="M1687 1059l8-8 8 8M1718 1048h16v11h-16zM1726 1059v4M1721 1063.500h10"/><path fill="#ccd5e7" d="M1716 1047h5v5h-5z"/><path d="M1745 1053h3l5-4v13l-5-4h-3zM1756 1052q2 3 0 7M1759 1050q4 5 0 11M1762 1048q5 7 0 15"/></svg>
 <div class="clock text-center"><div>11:21 AM</div><div>10/12/2022</div></div>
 <svg width="52" height="50" style="margin-right:-10px"><path fill="none" stroke="#111" stroke-width="1.500" d="M1 16h19v15h-6l-3.500 4-3.500-4H1z"/><path stroke="#9aa3b5" d="M37.500 0v50"/></svg>
</nav>

<script>
// guides: v line, t tee, l corner, n blank, + collapsed, - expanded, e expanded and last
const rows=[["vt","dom","Number"],["vt","dom","StateAbbreviation"],["vt","dom","String"],["vl","dom","ZipCode"],["-","ents","Entities"],["v+","ent","Address"],["ve","ent","Person"],["vn-","atts","Attributes"],
["vnvt","att","Address Id"],["vnvt","att","Person Date Of Birth"],["vnvt","att","Person Email Address"],["vnvt","att","Person First Name"],["vnvt","att","Person Gender Pronoun"],["vnvt","key","Person Id"],["vnvt","att","Person Last Name"],["vnvl","att","Person Phone Number"],
["vn+","rel","Child Relations"],["vn+","kg","Key Groups"],["vnl","rel","Parent Relations"],["+","er","ER Diagrams"],["t","src","Model Sources"],["t","nam","Naming Standards"],["+","rel","Relationships"],["t","subs","Subject Areas"],["+","thm","Themes"],["e","vals","Validation Rules"],
["nt","val","CK_String_GenderPronouns"],["nt","val","CK_String_StateAbbreviation"],["nt","val","CK_String_ZipCode"],["nl","val","Validation_Rule_707",1]];
const cell={v:'<span class="tcell"></span>',n:'<span class="tcell n"></span>',t:'<span class="tcell t"></span>',l:'<span class="tcell l"></span>','+':'<span class="tcell t"><i class="plus"></i></span>','-':'<span class="tcell t"><i></i></span>',e:'<span class="tcell l"><i></i></span>'};
document.getElementById('tree').innerHTML=rows.map(([g,ic,t,s])=>`<div class="trow">${[...g].map(c=>cell[c]).join('')}<svg width="20" height="20"><use href="#t-${ic}"/></svg><span class="lbl${s?' sel':''}">${t}</span></div>`).join('');
</script>
</body>
</html>
